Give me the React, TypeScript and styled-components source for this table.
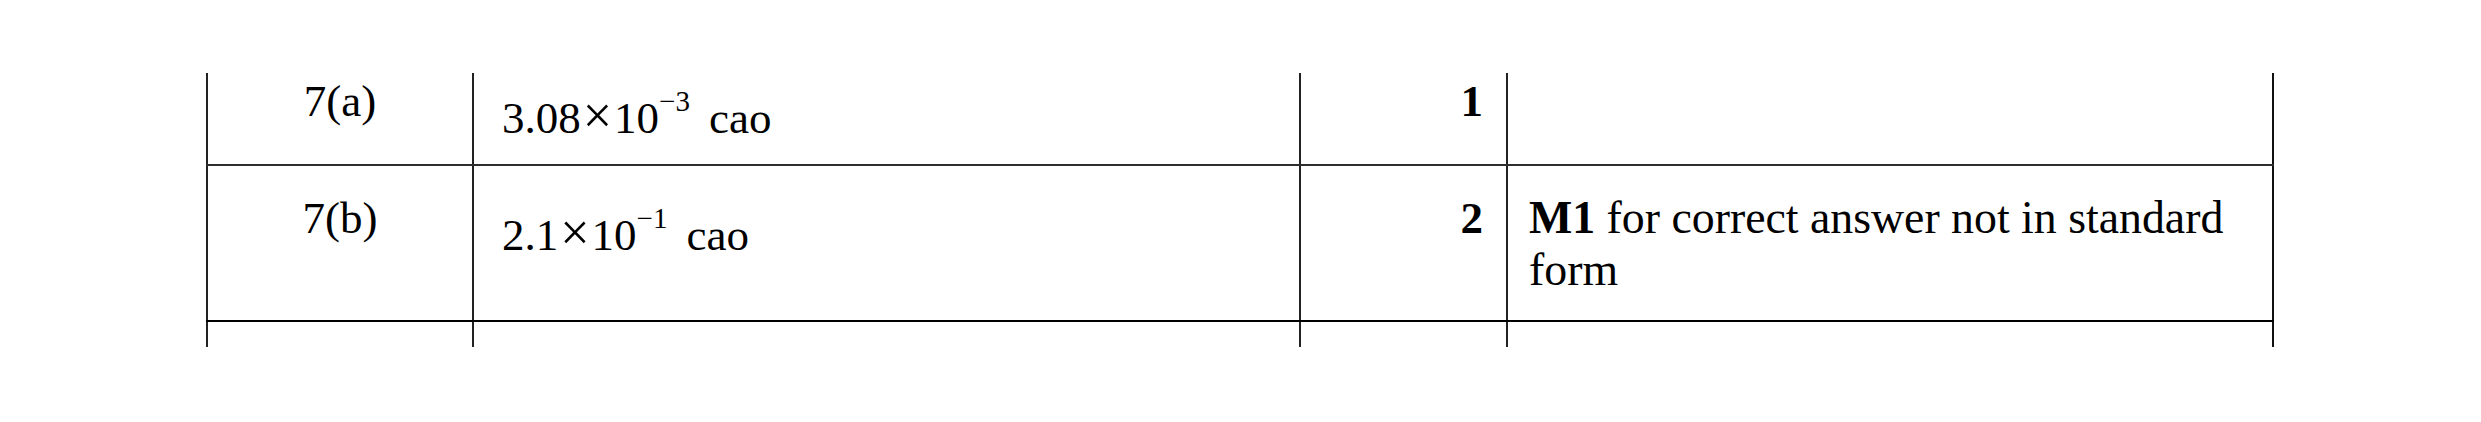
import React from "react";
import styled, { createGlobalStyle } from "styled-components";

const GlobalStyle = createGlobalStyle`
  html, body {
    margin: 0;
    padding: 0;
    background: #ffffff;
  }
  body {
    width: 2481px;
    height: 422px;
    overflow: hidden;
  }
`;

const serif = `"Liberation Serif", "Times New Roman", serif`;

const Page = styled.div`
  padding: 73px 0 0 206px;
  font-family: ${serif};
  font-size: 45px;
  color: #000;
`;

const Row = styled.div<{ $height: number; $last?: boolean; $dark?: boolean }>`
  display: grid;
  grid-template-columns: 266px 827px 207px 768px;
  width: 2068px;
  height: ${(p) => p.$height}px;
  box-sizing: border-box;
  border-bottom: ${(p) => (p.$last ? "none" : `2px solid ${p.$dark ? "#000" : "#2e2e2e"}`)};
`;

const Cell = styled.div<{ $top: number; $end?: boolean }>`
  border-left: 2px solid #222;
  border-right: ${(p) => (p.$end ? "2px solid #111" : "none")};
  padding-top: ${(p) => p.$top}px;
  line-height: 52px;
  box-sizing: border-box;
  font-family: ${serif};
`;

const Part = styled(Cell)`
  text-align: center;
`;

const Answer = styled(Cell)`
  padding-left: 28px;
  white-space: nowrap;
`;

const Times = styled.span`
  font-size: 52px;
  line-height: 0;
  margin: 0 2px;
`;

const Sup = styled.span`
  display: inline-block;
  font-size: 29px;
  line-height: 1;
  vertical-align: 22px;
`;

const Cao = styled.span`
  margin-left: 19px;
`;

const Mark = styled(Cell)`
  text-align: right;
  padding-right: 23px;
  font-weight: bold;
`;

const Guidance = styled(Cell)`
  padding-left: 21px;
  padding-right: 12px;
  font-size: 45.8px;
`;

const Bold = styled.span`
  font-weight: bold;
`;

function StandardForm({ mantissa, power }: { mantissa: string; power: string }) {
  return (
    <>
      {mantissa}
      <Times>×</Times>10<Sup>−{power}</Sup>
      <Cao>cao</Cao>
    </>
  );
}

export default function App() {
  return (
    <>
      <GlobalStyle />
      <Page>
        <Row $height={93}>
          <Part $top={2}>7(a)</Part>
          <Answer $top={14}>
            <StandardForm mantissa="3.08" power="3" />
          </Answer>
          <Mark $top={2}>1</Mark>
          <Guidance $top={2} $end />
        </Row>
        <Row $height={156} $dark>
          <Part $top={26}>7(b)</Part>
          <Answer $top={38}>
            <StandardForm mantissa="2.1" power="1" />
          </Answer>
          <Mark $top={26}>2</Mark>
          <Guidance $top={26} $end>
            <Bold>M1</Bold> for correct answer not in standard form
          </Guidance>
        </Row>
        <Row $height={25} $last>
          <Part $top={0} />
          <Answer $top={0} />
          <Mark $top={0} />
          <Guidance $top={0} $end />
        </Row>
      </Page>
    </>
  );
}
